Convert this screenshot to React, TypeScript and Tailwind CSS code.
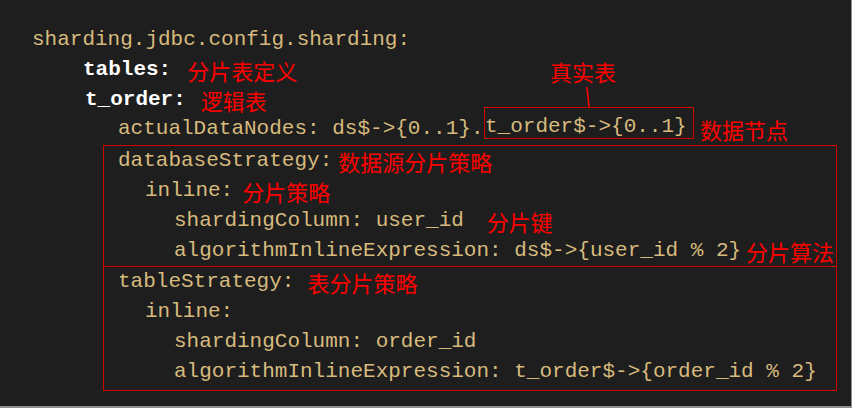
import type { ReactNode } from 'react';

function Row({ className = '', children }: { className?: string; children: ReactNode }) {
  return <div className={`flex h-[30px] items-center whitespace-pre ${className}`}>{children}</div>;
}

function Note({ className = '', children }: { className?: string; children: ReactNode }) {
  return (
    <span className={`font-['Noto_Sans_CJK_SC',sans-serif] text-[22px] leading-none text-[#ff0000] ${className}`}>
      {children}
    </span>
  );
}

export default function App() {
  return (
    <div className="h-[408px] w-[852px] overflow-hidden border-r border-b-2 border-[#8e8e8e] bg-[#1e1e1e] pt-[25px] pl-[32px] font-['Liberation_Mono',monospace] text-[21px] text-[#d7ba7d]">
      <Row>sharding.jdbc.config.sharding:</Row>
      <Row className="pl-[51px]">
        <span className="font-bold text-white">tables:</span>
        <Note className="ml-[16px]">分片表定义</Note>
      </Row>
      <Row className="pl-[53px]">
        <span className="font-bold text-white">t_order:</span>
        <Note className="ml-[15px]">逻辑表</Note>
      </Row>
      <div className="flex h-[28px] items-center whitespace-pre pl-[86px]">
        <span className="w-[366px]">actualDataNodes: ds$-&gt;{'{'}0..1{'}'}.</span>
        <span className="relative -mt-[12px] w-[210px] border border-[#d00000] pt-[8px] leading-[22px]">
          t_order$-&gt;{'{'}0..1{'}'}
          <Note className="absolute -top-[48px] left-[65px]">真实表</Note>
          <svg className="absolute -top-[22px] left-[100px]" width="8" height="22" viewBox="0 0 8 22">
            <line x1="2" y1="1" x2="4" y2="21" stroke="#ff0000" strokeWidth="1.6" />
          </svg>
        </span>
        <Note className="ml-[6px]">数据节点</Note>
      </div>
      <div className="mt-[2px] ml-[71px] w-[734px] border border-[#d00000]">
        <div className="border-b border-[#d00000]">
          <Row className="pl-[14px]">
            databaseStrategy:<Note className="ml-[6px]">数据源分片策略</Note>
          </Row>
          <Row className="pl-[41px]">
            inline:<Note className="ml-[9px]">分片策略</Note>
          </Row>
          <Row className="pl-[70px]">
            shardingColumn: user_id<Note className="ml-[23px]">分片键</Note>
          </Row>
          <Row className="pl-[70px]">
            algorithmInlineExpression: ds$-&gt;{'{'}user_id % 2{'}'}
            <Note className="ml-[5px]">分片算法</Note>
          </Row>
        </div>
        <div className="pb-[3px]">
          <Row className="pl-[14px]">
            tableStrategy:<Note className="ml-[13px]">表分片策略</Note>
          </Row>
          <Row className="pl-[41px]">inline:</Row>
          <Row className="pl-[70px]">shardingColumn: order_id</Row>
          <Row className="pl-[70px]">algorithmInlineExpression: t_order$-&gt;{'{'}order_id % 2{'}'}</Row>
        </div>
      </div>
    </div>
  );
}
